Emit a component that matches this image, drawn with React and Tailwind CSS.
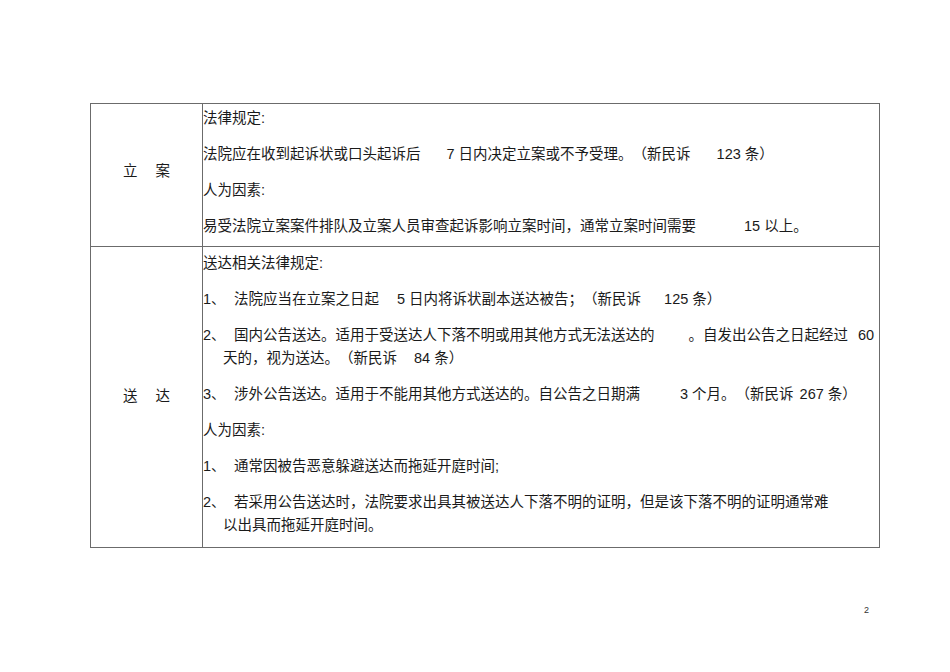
export default function App() {
  return (
    <div className="w-[950px] h-[672px] bg-white relative text-[#1a1a1a] font-['Liberation_Sans','Noto_Sans_CJK_SC',sans-serif] [text-spacing-trim:space-all]">
      <div className="pt-[103px] pl-[90px]">
        <div className="w-[790px] border border-[#6b6b6b] text-[14.5px]">
          <FilingRow />
          <ServiceRow />
        </div>
      </div>
      <div className="absolute left-[864px] top-[604px] text-[9px] text-[#333]">2</div>
    </div>
  );
}

function Label({ a, b, className = "" }) {
  return (
    <div className={"flex items-center justify-center gap-[18px] " + className}>
      <span>{a}</span>
      <span>{b}</span>
    </div>
  );
}

function Line({ children, first }) {
  return (
    <div className={"whitespace-nowrap leading-[23px] " + (first ? "" : "mt-[13px]")}>
      {children}
    </div>
  );
}

function Num({ n }) {
  return <span className="inline-block w-[31px]">{n}、</span>;
}

function FilingRow() {
  return (
    <div className="grid grid-cols-[111px_1fr] h-[142px]">
      <Label a="立" b="案" className="pb-[6px]" />
      <div className="border-l border-[#6b6b6b] pt-[3px]">
        <Line first>法律规定:</Line>
        <Line>
          法院应在收到起诉状或口头起诉后
          <span className="ml-[26px]">7 日内决定立案或不予受理。（新民诉</span>
          <span className="ml-[26px]">123 条）</span>
        </Line>
        <Line>人为因素:</Line>
        <Line>
          易受法院立案案件排队及立案人员审查起诉影响立案时间，通常立案时间需要
          <span className="ml-[48px]">15 以上。</span>
        </Line>
      </div>
    </div>
  );
}

function ServiceRow() {
  return (
    <div className="grid grid-cols-[111px_1fr] border-t border-[#6b6b6b] h-[301px]">
      <Label a="送" b="达" />
      <div className="border-l border-[#6b6b6b] pt-[5px]">
        <Line first>送达相关法律规定:</Line>
        <Line>
          <Num n="1" />
          法院应当在立案之日起
          <span className="ml-[18px]">5 日内将诉状副本送达被告；（新民诉</span>
          <span className="ml-[23px]">125 条）</span>
        </Line>
        <Line>
          <Num n="2" />
          国内公告送达。适用于受送达人下落不明或用其他方式无法送达的
          <span className="ml-[34px]">。自发出公告之日起经过</span>
          <span className="ml-[10px]">60</span>
        </Line>
        <div className="whitespace-nowrap leading-[23px] pl-[20px]">
          天的，视为送达。（新民诉
          <span className="ml-[17px]">84 条）</span>
        </div>
        <Line>
          <Num n="3" />
          涉外公告送达。适用于不能用其他方式送达的。自公告之日期满
          <span className="ml-[40px]">3 个月。（新民诉</span>
          <span className="ml-[6px]">267 条）</span>
        </Line>
        <Line>人为因素:</Line>
        <Line>
          <Num n="1" />
          通常因被告恶意躲避送达而拖延开庭时间;
        </Line>
        <Line>
          <Num n="2" />
          若采用公告送达时，法院要求出具其被送达人下落不明的证明，但是该下落不明的证明通常难
        </Line>
        <div className="whitespace-nowrap leading-[23px] pl-[20px]">以出具而拖延开庭时间。</div>
      </div>
    </div>
  );
}
